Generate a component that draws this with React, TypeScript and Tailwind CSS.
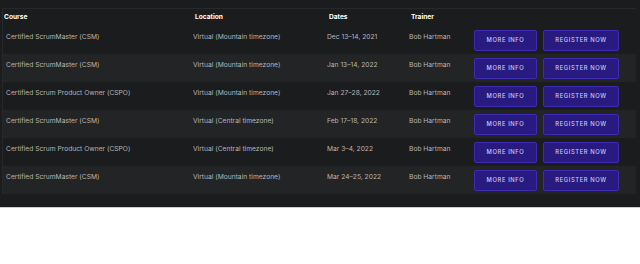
import React from "react";

const rows = [
  ["Certified ScrumMaster (CSM)", "Virtual (Mountain timezone)", "Dec 13\u201314, 2021"],
  ["Certified ScrumMaster (CSM)", "Virtual (Mountain timezone)", "Jan 13\u201314, 2022"],
  ["Certified Scrum Product Owner (CSPO)", "Virtual (Mountain timezone)", "Jan 27\u201328, 2022"],
  ["Certified ScrumMaster (CSM)", "Virtual (Central timezone)", "Feb 17\u201318, 2022"],
  ["Certified Scrum Product Owner (CSPO)", "Virtual (Central timezone)", "Mar 3\u20134, 2022"],
  ["Certified ScrumMaster (CSM)", "Virtual (Mountain timezone)", "Mar 24\u201325, 2022"],
];

export default function App() {
  return (
    <div
      className="w-[640px] antialiased bg-[#1b1c1e] pt-2 pb-[13px] pl-[2px] pr-1 border-b border-[#cfcfcf]"
      style={{ fontFamily: "Inter, 'Liberation Sans', sans-serif" }}
    >
      <div className="border-t border-l border-[#26282b]">
        <div className="grid grid-cols-[186px_134px_82px_66px_1fr] h-[17px] items-center text-[6.6px] font-bold text-white">
          <div className="pl-[1px]">Course</div>
          <div className="pl-[6px]">Location</div>
          <div className="pl-[6px]">Dates</div>
          <div className="pl-[6px]">Trainer</div>
          <div></div>
        </div>
        {rows.map((r, i) => (
          <div
            key={i}
            className={`grid grid-cols-[186px_134px_82px_66px_1fr] h-[28px] text-[6.7px] text-[#b6b6b6] ${
              i % 2 === 1 ? "bg-[#222426]" : "bg-[#1b1c1e]"
            }`}
          >
            <div className="pl-[3px] pt-[6px]">{r[0]}</div>
            <div className="pl-[4px] pt-[6px]">{r[1]}</div>
            <div className="pl-[4px] pt-[6px]">{r[2]}</div>
            <div className="pl-[4px] pt-[6px]">Bob Hartman</div>
            <div className="flex items-center gap-[6px] pl-[3px]">
              <button className="w-[63px] h-[21px] rounded-[2px] bg-[#281a7f] border border-[#3d2cb3] text-[#cdc8f0] text-[5.8px] font-medium tracking-[0.6px] uppercase">
                More Info
              </button>
              <button className="w-[76px] h-[21px] rounded-[2px] bg-[#281a7f] border border-[#3d2cb3] text-[#cdc8f0] text-[5.8px] font-medium tracking-[0.6px] uppercase">
                Register Now
              </button>
            </div>
          </div>
        ))}
      </div>
    </div>
  );
}
